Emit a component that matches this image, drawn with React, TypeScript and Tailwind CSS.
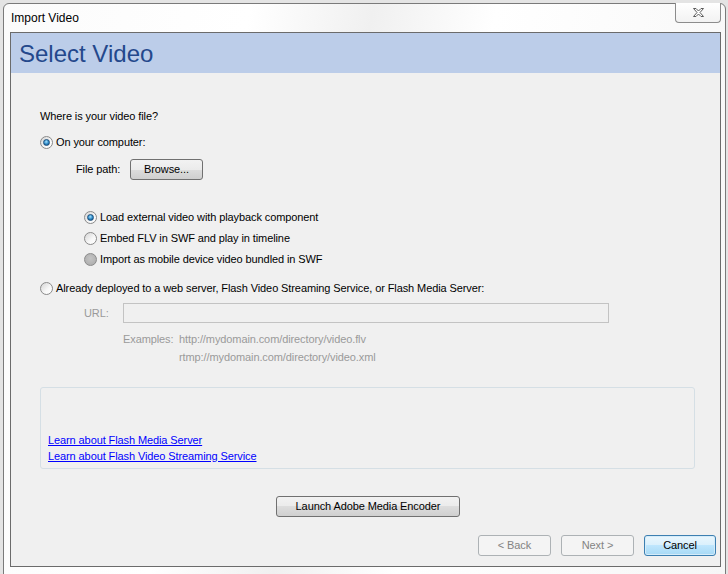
import React from 'react';

const font = { fontFamily: '"Liberation Sans", Arial, sans-serif' };

function Radio({ checked, pressed }: { checked?: boolean; pressed?: boolean }) {
  return (
    <span
      className={`relative inline-flex h-[13px] w-[13px] shrink-0 items-center justify-center rounded-full border border-[#8a8a8a] ${
        pressed
          ? 'bg-[radial-gradient(circle_at_50%_40%,#c4c4c4,#a9a9a9)]'
          : 'bg-[linear-gradient(135deg,#d4d4d4,#f8f8f8_60%,#ffffff)]'
      }`}
    >
      {checked && (
        <span className="h-[7px] w-[7px] rounded-full border border-[#1d4f7c] bg-[radial-gradient(circle_at_45%_35%,#a4e2ff,#2a86c4_55%,#0f4877)]" />
      )}
    </span>
  );
}

function Button({
  children,
  className = '',
  disabled,
  primary,
}: {
  children: React.ReactNode;
  className?: string;
  disabled?: boolean;
  primary?: boolean;
}) {
  let look =
    'border-[#707070] text-black bg-[linear-gradient(#f2f2f2,#ebebeb_50%,#dddddd_50%,#cfcfcf)]';
  if (disabled) look = 'border-[#adb2b5] text-[#838383] bg-[#f4f4f4]';
  if (primary)
    look =
      'border-[#3c7fb1] text-black bg-[linear-gradient(#eaf6fd,#d9f0fc_50%,#bee6fd_50%,#a7d9f5)] shadow-[inset_0_0_0_1px_#d5ecf9]';
  return (
    <div
      className={`flex h-[21px] items-center justify-center rounded-[3px] border text-[11px] ${look} ${className}`}
    >
      {children}
    </div>
  );
}

function RadioRow({
  label,
  checked,
  pressed,
  className = '',
}: {
  label: string;
  checked?: boolean;
  pressed?: boolean;
  className?: string;
}) {
  return (
    <div className={`flex h-[16px] items-center gap-[3px] ${className}`}>
      <Radio checked={checked} pressed={pressed} />
      <span>{label}</span>
    </div>
  );
}

export default function App() {
  return (
    <div className="h-[574px] w-[728px] overflow-hidden bg-[#e4e4e4] pl-[3px] pt-[3px]" style={font}>
      <div className="flex h-[575px] w-[723px] flex-col rounded-t-[6px] border border-[#7a7a7a] bg-[linear-gradient(100deg,#fbfbfb,#ffffff_30%,#f0f0f0_45%,#ffffff_60%,#f6f6f6)] pl-[6px] pr-[4px]">
        {/* title bar */}
        <div className="relative flex h-[28px] items-center pl-[1px] text-[12px] text-black">
          <span>Import Video</span>
          <div className="absolute -top-px right-0 flex h-[20px] w-[46px] items-center justify-center rounded-b-[4px] border border-t-0 border-[#8c8c8c] bg-[linear-gradient(#ffffff,#f2f2f2)]">
            <svg width="13" height="11" viewBox="0 0 13 11">
              <path
                d="M1.5 1.5h2.5l2.5 2.5 2.5-2.5h2.5l-3.5 4 3.5 4h-2.5l-2.5-2.5-2.5 2.5h-2.5l3.5-4z"
                fill="#ffffff"
                stroke="#5c5c5c"
                strokeWidth="1"
                strokeLinejoin="round"
              />
            </svg>
          </div>
        </div>

        {/* client area */}
        <div className="flex flex-col border border-[#6b6b6b] bg-[#f0f0f0] text-[11px] tracking-[-0.1px] text-black">
          <div className="flex h-[40px] items-center bg-[#bccde9] pl-[8px]">
            <span className="mt-[2px] text-[24px] leading-none tracking-normal text-[#24488c]">Select Video</span>
          </div>

          <div className="flex flex-col pl-[29px]">
            <div className="mt-[35px] flex h-[16px] items-center">Where is your video file?</div>
            <RadioRow className="mt-[10px]" label="On your computer:" checked />

            <div className="mt-[9px] flex items-center pl-[36px]">
              <span className="w-[54px]">File path:</span>
              <Button className="w-[73px]">Browse...</Button>
            </div>

            <div className="flex flex-col pl-[44px]">
              <RadioRow className="mt-[29px]" label="Load external video with playback component" checked />
              <RadioRow className="mt-[5px]" label="Embed FLV in SWF and play in timeline" />
              <RadioRow className="mt-[5px]" label="Import as mobile device video bundled in SWF" pressed />
            </div>

            <RadioRow
              className="mt-[13px]"
              label="Already deployed to a web server, Flash Video Streaming Service, or Flash Media Server:"
            />

            <div className="mt-[7px] flex items-center pl-[44px] text-[#9a9a9a]">
              <span className="w-[39px]">URL:</span>
              <div className="h-[20px] w-[486px] border border-[#c3c3c3] bg-[#f0f0f0]" />
            </div>

            <div className="mt-[8px] flex pl-[83px] text-[#9a9a9a]">
              <span className="w-[56px]">Examples:</span>
              <div className="flex flex-col gap-[2px]">
                <span className="h-[16px] leading-[16px]">http://mydomain.com/directory/video.flv</span>
                <span className="h-[16px] leading-[16px]">rtmp://mydomain.com/directory/video.xml</span>
              </div>
            </div>

            <div className="mt-[22px] flex h-[82px] w-[655px] flex-col justify-end rounded-[3px] border border-[#d5dfe5] pb-[4px] pl-[7px]">
              <span className="h-[16px] leading-[16px] text-[#0000ff] underline">Learn about Flash Media Server</span>
              <span className="h-[16px] leading-[16px] text-[#0000ff] underline">
                Learn about Flash Video Streaming Service
              </span>
            </div>

            <Button className="ml-[236px] mt-[27px] w-[184px]">Launch Adobe Media Encoder</Button>
          </div>

          <div className="mb-[10px] mt-[18px] flex justify-end gap-[10px] pr-[4px]">
            <Button className="w-[73px]" disabled>
              &lt; Back
            </Button>
            <Button className="w-[73px]" disabled>
              Next &gt;
            </Button>
            <Button className="w-[72px]" primary>
              Cancel
            </Button>
          </div>
        </div>
      </div>
    </div>
  );
}
